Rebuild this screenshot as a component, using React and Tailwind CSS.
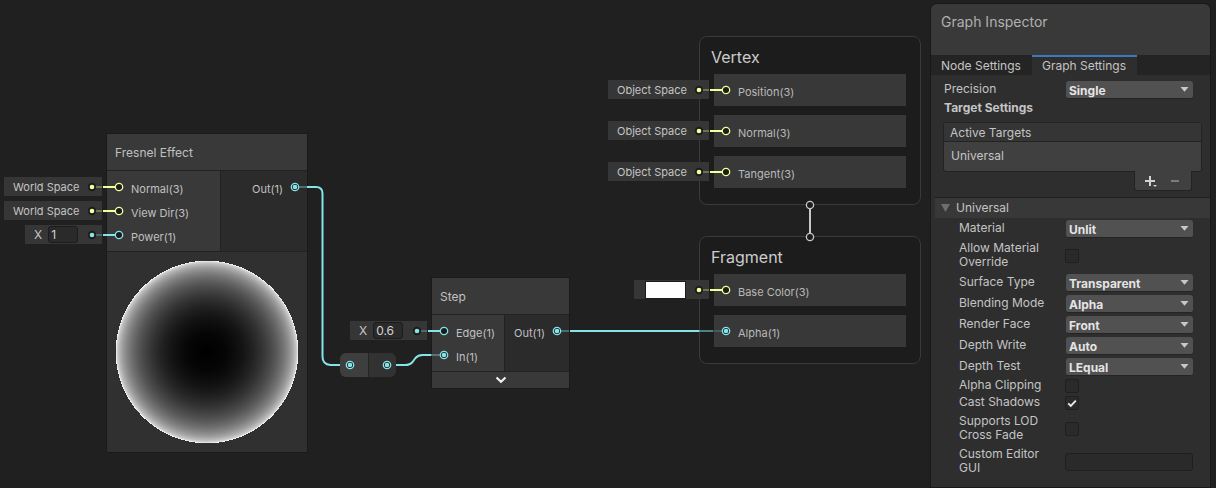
import { useState } from "react";

const YELLOW = "#f6ff9a";
const CYAN = "#84e4e7";

function Port({ color, connected = false }) {
  return (
    <svg className="block size-[10px] shrink-0" viewBox="0 0 10 10" aria-hidden="true">
      <circle cx="5" cy="5" r="3.7" fill="#1c1c1c" stroke={color} strokeWidth="1.3" />
      {connected && <circle cx="5" cy="5" r="2.3" fill={color} />}
    </svg>
  );
}

function Dot({ color }) {
  return (
    <svg className="block size-[10px] shrink-0" viewBox="0 0 10 10" aria-hidden="true">
      <circle cx="5" cy="5" r="4.2" fill="#1c1c1c" />
      <circle cx="5" cy="5" r="2.3" fill={color} />
    </svg>
  );
}

function InPort({ color, connected, children }) {
  return (
    <li className="flex h-6 items-center gap-[7px] pl-[7px]">
      <Port color={color} connected={connected} />
      <span className="pt-1">{children}</span>
    </li>
  );
}

function OutPort({ color, children }) {
  return (
    <li className="flex h-6 items-center justify-end gap-[7px] pr-[7px]">
      <span className="pt-1">{children}</span>
      <Port color={color} connected />
    </li>
  );
}

function Chip({ place, color, children }) {
  return (
    <div
      className={`absolute flex h-[19px] items-center justify-between bg-[#363636] pr-[5px] pl-[9px] text-[11px] leading-[16px] text-[#c4c4c4] ${place}`}
    >
      {children}
      <Dot color={color} />
    </div>
  );
}

function ValueField({ initial }) {
  const [value, setValue] = useState(initial);
  return (
    <label className="flex items-center gap-[6px] text-[12px]">
      X
      <input
        className="h-[17px] w-[30px] rounded-[3px] border border-[#1c1c1c] bg-[#2a2a2a] px-[2px] text-[12px] text-[#d2d2d2] outline-none"
        value={value}
        onChange={(e) => setValue(e.target.value)}
      />
    </label>
  );
}

function NodeCard({ place, title, inputs, outputs, columns, children }) {
  return (
    <section
      className={`absolute flex flex-col gap-px bg-[#222222] text-[11px] leading-[16px] text-[#c0c0c0] shadow-[0_0_0_1px_#1a1a1a] ${place}`}
    >
      <h2 className="flex h-9 items-center bg-[#393939] px-2 pt-px text-[12px]">{title}</h2>
      <div className={`grid gap-px ${columns}`}>
        <ul className="bg-[#393939] py-1">{inputs}</ul>
        <ul className="bg-[#2b2b2b] py-1">{outputs}</ul>
      </div>
      {children}
    </section>
  );
}

function Slot({ color, connected, children }) {
  return (
    <li className="flex h-8 items-center gap-[7px] bg-[#383838] pl-[7px]">
      <Port color={color} connected={connected} />
      <span className="pt-1">{children}</span>
    </li>
  );
}

function Block({ place, title, children }) {
  return (
    <section
      className={`absolute w-[222px] rounded-[8px] border border-[#3a3a3a] bg-[#1c1c1c] px-[14px] pt-2 pb-4 ${place}`}
    >
      <h2 className="-ml-[3px] h-[29px] text-[16px] leading-6 text-[#cccccc]">{title}</h2>
      <ul className="flex flex-col gap-[9px] text-[11px] leading-[16px] text-[#b8b8b8]">{children}</ul>
    </section>
  );
}

function Stub({ x, y, color }) {
  return (
    <g stroke={color} strokeWidth="2">
      <path d={`M${x + 4} ${y}h6`} strokeOpacity=".3" />
      <path d={`M${x + 11} ${y}h12`} />
    </g>
  );
}

function Wires() {
  return (
    <svg className="pointer-events-none absolute inset-0 size-full" fill="none" aria-hidden="true">
      <Stub x={92} y={187} color={YELLOW} />
      <Stub x={92} y={211} color={YELLOW} />
      <Stub x={92} y={235} color={CYAN} />
      <Stub x={417} y={331} color={CYAN} />
      <Stub x={699} y={90} color={YELLOW} />
      <Stub x={699} y={131} color={YELLOW} />
      <Stub x={699} y={172} color={YELLOW} />
      <Stub x={699} y={290} color={YELLOW} />
      <g stroke={CYAN} strokeWidth="2">
        <path d="M299 187h8M432 355h8M561 331h8" strokeOpacity=".35" />
        <path d="M307 187h9q6.500 0 6.500 6.500v163q0 8 8 8.500h9.500" />
        <path d="M396 365h9q5 0 7.500-3l3-4q2.500-3 7-3h9" />
        <path d="M570 331h129" />
        <path d="M699 331h14" strokeOpacity=".5" />
        <path d="M713 331h9" strokeOpacity=".2" />
      </g>
      <g stroke="#c8c8c8">
        <path d="M810 208v26" strokeWidth="2" />
        <circle cx="810" cy="205" r="3.6" fill="#1c1c1c" strokeWidth="1.3" />
        <circle cx="810" cy="237" r="3.6" fill="#1c1c1c" strokeWidth="1.3" />
      </g>
    </svg>
  );
}

const FRESNEL_STOPS = [0, 0.2, 0.3, 0.4, 0.5, 0.6, 0.7, 0.76, 0.82, 0.87, 0.91, 0.94, 0.965, 0.985, 1];

function FresnelPreview() {
  return (
    <svg className="block h-[200px] w-full bg-[#303030]" viewBox="0 0 200 200" role="img" aria-label="Preview">
      <defs>
        <radialGradient id="fresnel">
          {FRESNEL_STOPS.map((r) => {
            const v = Math.round(255 * (1 - Math.sqrt(1 - r * r)));
            return <stop key={r} offset={r} stopColor={`rgb(${v},${v},${v})`} />;
          })}
        </radialGradient>
      </defs>
      <circle cx="100" cy="100" r="91.4" fill="url(#fresnel)" shapeRendering="crispEdges" />
    </svg>
  );
}

function Dropdown({ id, options }) {
  return (
    <div className="relative flex-1">
      <select
        id={id}
        className="block h-[18px] w-full appearance-none rounded-[3px] border-b border-[#242424] bg-[#515151] pt-[2px] pr-5 pl-[3px] text-[12px] leading-[15px] font-bold text-[#e4e4e4] outline-none"
      >
        {options.map((o) => (
          <option key={o}>{o}</option>
        ))}
      </select>
      <svg className="pointer-events-none absolute top-[6px] right-1 h-[5px] w-[9px]" viewBox="0 0 9 5" aria-hidden="true">
        <path d="M0.5 0h8L4.5 4.8z" fill="#c8c8c8" />
      </svg>
    </div>
  );
}

function CheckBox({ id, defaultChecked }) {
  return (
    <div className="relative size-[14px]">
      <input
        id={id}
        type="checkbox"
        defaultChecked={defaultChecked}
        className="peer block size-[14px] appearance-none rounded-[2px] border border-[#1f1f1f] bg-[#2a2a2a]"
      />
      <svg
        className="pointer-events-none invisible absolute inset-0 size-[14px] peer-checked:visible"
        viewBox="0 0 14 14"
        fill="none"
        aria-hidden="true"
      >
        <path d="M3.2 7.4l2.6 2.6 5-5.4" stroke="#e8e8e8" strokeWidth="1.9" />
      </svg>
    </div>
  );
}

function Row({ id, label, height = "min-h-[21px]", labelWidth = "w-[107px]", indent = "pl-7", children }) {
  return (
    <div className={`flex items-center pr-[17px] ${indent} ${height}`}>
      <label htmlFor={id} className={`shrink-0 pr-4 pb-[2px] leading-[14px] ${labelWidth}`}>
        {label}
      </label>
      {children}
    </div>
  );
}

function Inspector() {
  return (
    <aside className="mt-1 mr-[6px] mb-px flex w-[279px] shrink-0 flex-col overflow-hidden rounded-t-[6px] bg-[#2e2e2e] text-[12px] text-[#c4c4c4] shadow-[0_0_0_1px_#191919]">
      <h1 className="h-[51px] bg-[#393939] px-[10px] pt-2 text-[14px] leading-5 text-[#b0b0b0]">Graph Inspector</h1>
      <div role="tablist" className="flex h-5 bg-[#242424]">
        <button role="tab" aria-selected="false" className="w-[101px] pt-[2px] pl-[10px] text-left leading-[18px]">
          Node Settings
        </button>
        <button
          role="tab"
          aria-selected="true"
          className="w-[105px] border-t-2 border-[#3a79bb] bg-[#2e2e2e] pl-[10px] text-left leading-[18px]"
        >
          Graph Settings
        </button>
      </div>

      <div className="pt-1">
        <Row id="precision" label="Precision" indent="pl-[13px]" labelWidth="w-[122px]">
          <Dropdown id="precision" options={["Single", "Half"]} />
        </Row>
      </div>
      <h2 className="pl-[13px] leading-4 font-bold">Target Settings</h2>

      <div className="mt-[6px] mr-2 ml-[12px] rounded-[3px] border border-[#232323] bg-[#404040]">
        <h3 className="h-[19px] border-b border-[#232323] bg-[#353535] pl-[6px] leading-5">Active Targets</h3>
        <p className="h-[29px] pl-[7px] leading-7">Universal</p>
      </div>
      <div className="-mt-px mr-[18px] flex h-5 w-[58px] items-center justify-around self-end rounded-b-[3px] border border-t-0 border-[#232323] bg-[#404040] px-1">
        <button aria-label="Add target">
          <svg className="block h-[14px] w-[14px]" viewBox="0 0 14 14" aria-hidden="true">
            <path d="M6 2v10M1 7h10" stroke="#d2d2d2" strokeWidth="2" />
            <path d="M9 11h4l-2 2z" fill="#d2d2d2" />
          </svg>
        </button>
        <button aria-label="Remove target">
          <svg className="block h-[14px] w-[14px]" viewBox="0 0 14 14" aria-hidden="true">
            <path d="M3 7h8" stroke="#7c7c7c" strokeWidth="2" />
          </svg>
        </button>
      </div>

      <button className="mt-[6px] ml-1 flex h-[21px] items-center gap-[6px] border-t border-[#1f1f1f] bg-[#383838] pl-[6px] text-left leading-5">
        <svg className="block h-2 w-[9px]" viewBox="0 0 9 8" aria-hidden="true">
          <path d="M0 0h9L4.5 8z" fill="#6e6e6e" />
        </svg>
        Universal
      </button>

      <div>
        <Row id="material" label="Material">
          <Dropdown id="material" options={["Unlit", "Lit"]} />
        </Row>
        <Row id="override" label="Allow Material Override" height="min-h-[33px]" labelWidth="w-[106px]">
          <CheckBox id="override" />
        </Row>
        <Row id="surface" label="Surface Type">
          <Dropdown id="surface" options={["Transparent", "Opaque"]} />
        </Row>
        <Row id="blending" label="Blending Mode">
          <Dropdown id="blending" options={["Alpha", "Premultiply", "Additive", "Multiply"]} />
        </Row>
        <Row id="face" label="Render Face">
          <Dropdown id="face" options={["Front", "Back", "Both"]} />
        </Row>
        <Row id="write" label="Depth Write">
          <Dropdown id="write" options={["Auto", "ForceEnabled", "ForceDisabled"]} />
        </Row>
        <Row id="test" label="Depth Test">
          <Dropdown id="test" options={["LEqual", "Less", "Always"]} />
        </Row>
        <Row id="clipping" label="Alpha Clipping" height="min-h-[17px]" labelWidth="w-[106px]">
          <CheckBox id="clipping" />
        </Row>
        <Row id="shadows" label="Cast Shadows" height="min-h-[18px]" labelWidth="w-[106px]">
          <CheckBox id="shadows" defaultChecked />
        </Row>
        <Row id="lod" label="Supports LOD Cross Fade" height="min-h-[33px]" labelWidth="w-[106px]">
          <CheckBox id="lod" />
        </Row>
        <Row id="gui" label="Custom Editor GUI" height="min-h-[34px]" labelWidth="w-[106px]">
          <input
            id="gui"
            className="h-[18px] min-w-0 flex-1 rounded-[3px] border border-[#1f1f1f] bg-[#2a2a2a] px-1 outline-none"
          />
        </Row>
      </div>
    </aside>
  );
}

export default function App() {
  return (
    <div className="flex min-h-screen bg-[#202020] font-['Inter',sans-serif]">
      <main className="relative min-w-0 flex-1 overflow-hidden">
        <NodeCard
          place="left-[107px] top-[134px] w-[200px]"
          title="Fresnel Effect"
          columns="grid-cols-[113px_1fr]"
          inputs={
            <>
              <InPort color={YELLOW}>Normal(3)</InPort>
              <InPort color={YELLOW}>View Dir(3)</InPort>
              <InPort color={CYAN}>Power(1)</InPort>
            </>
          }
          outputs={<OutPort color={CYAN}>Out(1)</OutPort>}
        >
          <FresnelPreview />
        </NodeCard>

        <NodeCard
          place="left-[432px] top-[278px] w-[137px]"
          title="Step"
          columns="grid-cols-[72px_1fr]"
          inputs={
            <>
              <InPort color={CYAN}>Edge(1)</InPort>
              <InPort color={CYAN} connected>
                In(1)
              </InPort>
            </>
          }
          outputs={<OutPort color={CYAN}>Out(1)</OutPort>}
        >
          <button aria-label="Expand" className="flex h-4 items-center justify-center bg-[#393939]">
            <svg className="block h-[8px] w-[12px]" viewBox="0 0 12 8" fill="none" aria-hidden="true">
              <path d="M1.5 1.5L6 5.8l4.5-4.3" stroke="#f0f0f0" strokeWidth="2.2" />
            </svg>
          </button>
        </NodeCard>

        <div className="absolute top-[353px] left-[340px] grid h-6 w-14 grid-cols-2 gap-px overflow-hidden rounded-[6px] bg-[#242424]">
          <div className="flex items-center bg-[#3e3e3e] pl-[5px]">
            <Port color={CYAN} connected />
          </div>
          <div className="flex items-center justify-end bg-[#323232] pr-[4px]">
            <Port color={CYAN} connected />
          </div>
        </div>

        <Block place="left-[699px] top-[36px]" title="Vertex">
          <Slot color={YELLOW}>Position(3)</Slot>
          <Slot color={YELLOW}>Normal(3)</Slot>
          <Slot color={YELLOW}>Tangent(3)</Slot>
        </Block>
        <Block place="left-[699px] top-[236px]" title="Fragment">
          <Slot color={YELLOW}>Base Color(3)</Slot>
          <Slot color={CYAN} connected>
            Alpha(1)
          </Slot>
        </Block>

        <Chip place="left-[4px] top-[177px] w-[98px]" color={YELLOW}>
          World Space
        </Chip>
        <Chip place="left-[4px] top-[201px] w-[98px]" color={YELLOW}>
          World Space
        </Chip>
        <Chip place="left-[25px] top-[225px] w-[77px]" color={CYAN}>
          <ValueField initial="1" />
        </Chip>
        <Chip place="left-[350px] top-[321px] w-[77px]" color={CYAN}>
          <ValueField initial="0.6" />
        </Chip>
        <Chip place="left-[608px] top-[80px] w-[101px]" color={YELLOW}>
          Object Space
        </Chip>
        <Chip place="left-[608px] top-[121px] w-[101px]" color={YELLOW}>
          Object Space
        </Chip>
        <Chip place="left-[608px] top-[162px] w-[101px]" color={YELLOW}>
          Object Space
        </Chip>
        <Chip place="left-[634px] top-[280px] w-[75px]" color={YELLOW}>
          <button aria-label="Base color" className="ml-[2px] h-[18px] w-[41px] border border-[#1c1c1c] bg-white" />
        </Chip>

        <Wires />
      </main>
      <Inspector />
    </div>
  );
}
